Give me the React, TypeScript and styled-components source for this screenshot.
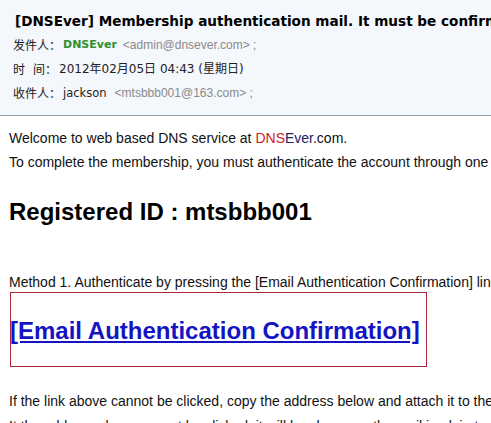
import React from "react";
import styled, { createGlobalStyle } from "styled-components";

const Global = createGlobalStyle`
  html, body { margin: 0; padding: 0; background: #ffffff; overflow: hidden; }
  body { width: 491px; height: 423px; }
`;

const Page = styled.div`
  width: 491px;
  height: 423px;
  overflow: hidden;
  background: #ffffff;
`;

const Header = styled.div`
  background: #f4f7fb;
  border-bottom: 1px solid #8fa2b2;
  height: 116px;
  box-sizing: border-box;
  padding: 11px 0 0 13px;
  white-space: nowrap;
`;

const Title = styled.div`
  font-family: "DejaVu Sans", Verdana, sans-serif;
  font-weight: bold;
  font-size: 13.6px;
  line-height: 20px;
  color: #000;
  padding-left: 2px;
  margin-bottom: 2px;
`;

const MetaRow = styled.div`
  font-family: "DejaVu Sans", "Noto Sans CJK SC", sans-serif;
  font-size: 12px;
  line-height: 24px;
  height: 24px;
  color: #222;
  display: flex;
  align-items: center;
`;

const Label = styled.span`
  font-family: "Noto Sans CJK SC", sans-serif;
  font-size: 12px;
  color: #222;
  margin-right: 2px;
  display: inline-flex;
`;

const LabelGap = styled.span`
  display: inline-block;
  width: 8px;
`;

const Sender = styled.span`
  color: #2f8f2f;
  font-weight: bold;
  font-size: 11px;
  margin-right: 6px;
`;

const Person = styled.span`
  font-size: 11.5px;
  margin-right: 8px;
`;

const Addr = styled.span`
  font-family: "Liberation Sans", Arial, sans-serif;
  font-size: 12px;
  color: #8a8a8a;
`;

const Body = styled.div`
  padding: 10px 0 0 9px;
  font-family: "Liberation Sans", Arial, sans-serif;
  font-size: 14px;
  color: #111;
  white-space: nowrap;
`;

const Line = styled.div<{ $mt?: number; $lh?: number }>`
  line-height: ${(p) => p.$lh ?? 24}px;
  margin-top: ${(p) => p.$mt ?? 0}px;
`;

const Red = styled.span`
  color: #cc2222;
`;
const Navy = styled.span`
  color: #222266;
`;

const RegId = styled.div`
  font-family: "Liberation Sans", Arial, sans-serif;
  font-weight: bold;
  font-size: 24px;
  line-height: 30px;
  margin-top: 23px;
  color: #000;
`;

const LinkBox = styled.div`
  margin: 0 0 0 1px;
  width: 417px;
  height: 75px;
  box-sizing: border-box;
  border: 1px solid #a8283a;
  display: flex;
  align-items: center;
`;

const BigLink = styled.a`
  font-family: "Liberation Sans", Arial, sans-serif;
  font-weight: bold;
  font-size: 24px;
  color: #1414c4;
  text-decoration: underline;
  margin-left: -1px;
  margin-top: 3px;
`;

export default function App() {
  return (
    <Page>
      <Global />
      <Header>
        <Title>[DNSEver] Membership authentication mail. It must be confirmed</Title>
        <MetaRow>
          <Label>发件人：</Label>
          <Sender>DNSEver</Sender>
          <Addr>&lt;admin@dnsever.com&gt; ;</Addr>
        </MetaRow>
        <MetaRow>
          <Label>
            时<LabelGap />间：
          </Label>
          <span>2012年02月05日 04:43 (星期日)</span>
        </MetaRow>
        <MetaRow>
          <Label>收件人：</Label>
          <Person>jackson</Person>
          <Addr>&lt;mtsbbb001@163.com&gt; ;</Addr>
        </MetaRow>
      </Header>
      <Body>
        <Line>
          Welcome to web based DNS service at <Red>DNS</Red>
          <Navy>Ever</Navy>.com.
        </Line>
        <Line>
          To complete the membership, you must authenticate the account through one of the methods below.
        </Line>
        <RegId>Registered ID : mtsbbb001</RegId>
        <Line $mt={45} $lh={20}>
          Method 1. Authenticate by pressing the [Email Authentication Confirmation] link below.
        </Line>
        <LinkBox>
          <BigLink href="#">[Email Authentication Confirmation]</BigLink>
        </LinkBox>
        <Line $mt={22}>
          If the link above cannot be clicked, copy the address below and attach it to the browser.
        </Line>
        <Line $mt={1}>
          It the address above cannot be clicked, it will be shown on the mail in plain text.
        </Line>
      </Body>
    </Page>
  );
}
